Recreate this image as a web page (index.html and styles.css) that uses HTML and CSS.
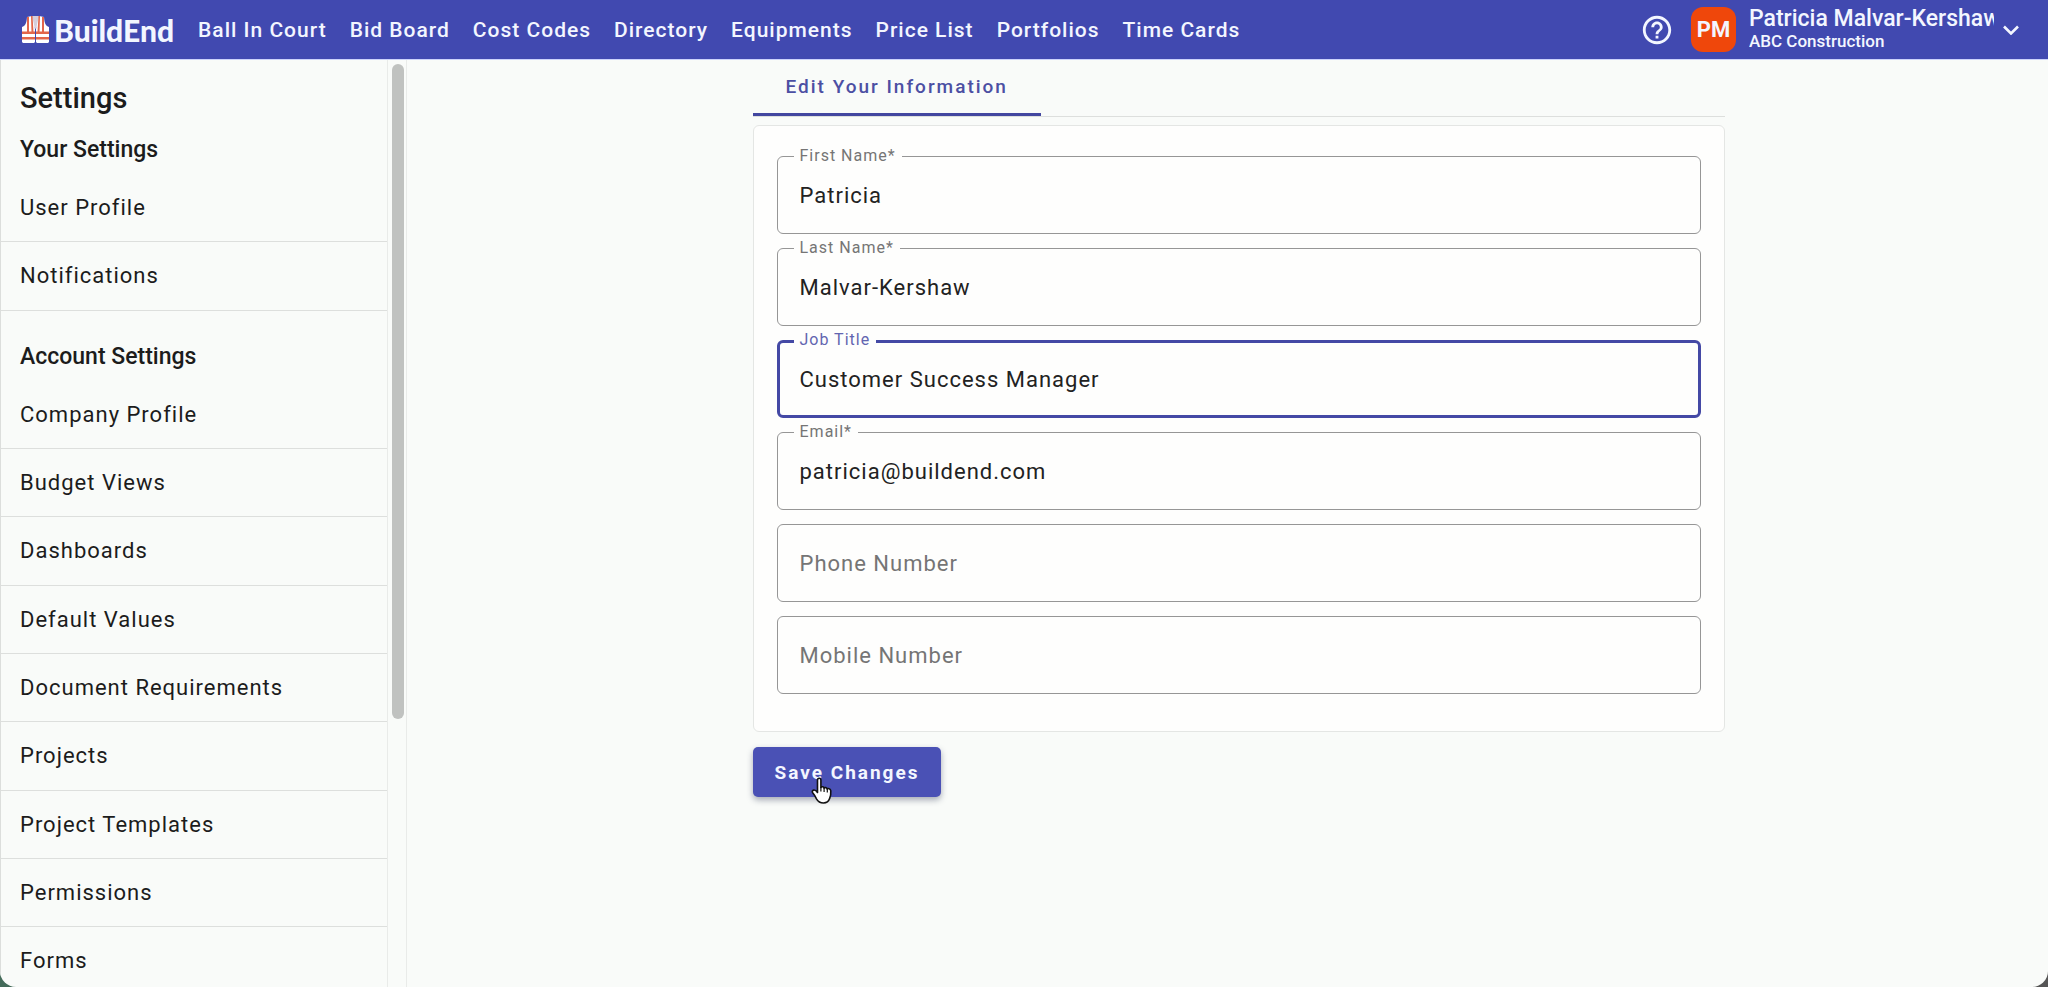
FILE: index.html
```html
<!DOCTYPE html>
<html lang="en">
<head>
<meta charset="utf-8">
<meta name="viewport" content="width=device-width, initial-scale=1">
<title>BuildEnd Settings</title>
<link rel="stylesheet" href="styles.css">
</head>
<body>
<div class="window">
  <header class="topbar">
    <a class="brand" href="#">
      <svg class="brand-icon" viewBox="0 0 27 28" aria-hidden="true">
        <path d="M10 0h7l-1 9-2.500 4L11 9z" fill="#d5cfdc"/>
        <path d="M5 1l5-1 3 13v13l-1 1H1l-1-1V11c3-1 4.500-3 5-10z" fill="#fff"/>
        <path d="M22 1l-5-1-3 13v13l1 1h11l1-1V11c-3-1-4.500-3-5-10z" fill="#fff"/>
        <path d="M5 1h2v15H5zM9 0h1.500l1 16H9.500zM16.500 0H18l-.5 16h-2zM20 1h2v15h-2z" fill="#e2664b"/>
        <path d="M0 15.500h13V18H0zM14 15.500h13V18H14zM0 21h13v2.500H0zM14 21h13v2.500H14z" fill="#e2664b"/>
      </svg>
      <span>BuildEnd</span>
    </a>
    <nav class="topnav" aria-label="Main">
      <a href="#">Ball In Court</a>
      <a href="#">Bid Board</a>
      <a href="#">Cost Codes</a>
      <a href="#">Directory</a>
      <a href="#">Equipments</a>
      <a href="#">Price List</a>
      <a href="#">Portfolios</a>
      <a href="#">Time Cards</a>
    </nav>
    <button class="help" type="button" aria-label="Help">
      <svg viewBox="0 0 24 24" aria-hidden="true"><path fill="currentColor" d="M11 18h2v-2h-2v2zm1-16C6.480 2 2 6.480 2 12s4.480 10 10 10 10-4.480 10-10S17.520 2 12 2zm0 18c-4.410 0-8-3.590-8-8s3.590-8 8-8 8 3.590 8 8-3.590 8-8 8zm0-14c-2.210 0-4 1.790-4 4h2c0-1.100.9-2 2-2s2 .9 2 2c0 2-3 1.750-3 5h2c0-2.250 3-2.500 3-5 0-2.210-1.790-4-4-4z"/></svg>
    </button>
    <button class="account" type="button">
      <span class="avatar">PM</span>
      <span class="account-text">
        <span class="account-name">Patricia Malvar-Kershaw</span>
        <span class="account-company">ABC Construction</span>
      </span>
      <svg class="chevron" viewBox="0 0 16 10" aria-hidden="true"><path d="M1 1.500l7 7 7-7" fill="none" stroke="currentColor" stroke-width="2.600"/></svg>
    </button>
  </header>

  <div class="body">
    <aside class="sidebar">
      <div class="menu">
        <h1>Settings</h1>
        <h2>Your Settings</h2>
        <ul>
          <li><a href="#">User Profile</a></li>
          <li><a href="#">Notifications</a></li>
        </ul>
        <h2 class="next">Account Settings</h2>
        <ul>
          <li><a href="#">Company Profile</a></li>
          <li><a href="#">Budget Views</a></li>
          <li><a href="#">Dashboards</a></li>
          <li><a href="#">Default Values</a></li>
          <li><a href="#">Document Requirements</a></li>
          <li><a href="#">Projects</a></li>
          <li><a href="#">Project Templates</a></li>
          <li><a href="#">Permissions</a></li>
          <li><a href="#">Forms</a></li>
        </ul>
      </div>
      <div class="scroll-track"><div class="scroll-thumb"></div></div>
    </aside>

    <main class="content">
      <form class="profile">
        <div class="tabs" role="tablist">
          <button class="tab" type="button" role="tab" aria-selected="true">Edit Your Information</button>
        </div>
        <div class="card">
          <div class="field">
            <input id="first" type="text" value="Patricia">
            <label for="first">First Name*</label>
          </div>
          <div class="field">
            <input id="last" type="text" value="Malvar-Kershaw">
            <label for="last">Last Name*</label>
          </div>
          <div class="field active">
            <input id="title" type="text" value="Customer Success Manager">
            <label for="title">Job Title</label>
          </div>
          <div class="field">
            <input id="email" type="email" value="patricia@buildend.com">
            <label for="email">Email*</label>
          </div>
          <div class="field">
            <input type="tel" placeholder="Phone Number" aria-label="Phone Number">
          </div>
          <div class="field">
            <input type="tel" placeholder="Mobile Number" aria-label="Mobile Number">
          </div>
        </div>
        <button class="save" type="button">Save Changes
          <svg class="pointer" viewBox="0 0 22 28" aria-hidden="true"><path d="M6.500 3.200C6.500 1.900 7.200 1.200 8.200 1.200s1.700.7 1.700 2v7.300c.3-1 2.900-1 3.200.6.500-.9 2.800-.7 3.100.9.600-.8 3.300-.5 3.600 1.800.2 2.700-.1 5.300-1.200 7.800-.9 2.700-2.900 4.400-6.100 4.400-3.700 0-5.500-1.500-7-4.200-1.100-2.200-2.300-4.200-3.800-6-.9-1.200-.3-2.500 1-2.700 1.400-.2 2.700.8 3.800 2.400z" fill="#fff" stroke="#111" stroke-width="1.600" stroke-linejoin="round"/><path d="M9.900 10v4.500M13.100 11v4M16.300 12v3.500" stroke="#111" stroke-width="1.200" fill="none"/></svg>
        </button>
      </form>
    </main>
  </div>
</div>
</body>
</html>
```
FILE: styles.css
```css
* { box-sizing: border-box; }

body {
  margin: 0;
  font-family: Roboto, "Liberation Sans", sans-serif;
  font-size: 22px;
  color: #1c1c1c;
  background: linear-gradient(90deg, #446b5a, #555);
}

button, input { font: inherit; }
button { border: 0; cursor: pointer; }
a { color: inherit; text-decoration: none; }

.window {
  display: flex;
  flex-direction: column;
  height: 100vh;
  overflow: hidden;
  background: #f9fbf9;
  border-radius: 0 0 16px 16px;
}

/* Top bar */
.topbar {
  display: flex;
  align-items: center;
  flex: none;
  height: 60px;
  padding: 0 29px 0 22px;
  color: #f3f6ff;
  background: #4149b0;
  border-bottom: 1px solid #ccd2fb;
}

.brand {
  display: flex;
  align-items: center;
  gap: 5px;
  margin-right: 24px;
  font: 900 30px/32px Lato, sans-serif;
}

.brand-icon { width: 27px; height: 28px; }

.topnav {
  display: flex;
  gap: 23px;
  font-size: 21px;
  font-weight: 500;
  letter-spacing: 1px;
  white-space: nowrap;
}

.help {
  width: 34px;
  height: 34px;
  margin-left: auto;
  padding: 0;
  color: inherit;
  background: none;
}

.help svg { display: block; width: 34px; height: 34px; }

.account {
  display: flex;
  align-items: center;
  margin-left: 17px;
  padding: 0;
  color: inherit;
  background: none;
  text-align: left;
}

.avatar {
  width: 45px;
  height: 45px;
  margin-right: 13px;
  border-radius: 12px;
  background: #ef470b;
  font-weight: 700;
  line-height: 45px;
  text-align: center;
}

.account-text {
  display: flex;
  flex-direction: column;
  width: 245px;
  overflow: hidden;
  font-weight: 500;
  white-space: nowrap;
}

.account-name { font-size: 23px; line-height: 24px; }
.account-company { padding-bottom: 2px; font-size: 17px; line-height: 20px; }
.chevron { width: 16px; height: 10px; margin-left: 9px; }

/* Sidebar */
.body { display: flex; flex: 1; min-height: 0; }

.sidebar {
  display: flex;
  flex: none;
  width: 407px;
  overflow: hidden;
  border-right: 1px solid #e9ebe9;
  border-left: 1px solid #dcdedc;
}

.menu { flex: 1; border-right: 1px solid #e9ebe9; }

.menu h1 {
  margin: 0;
  padding: 22px 19px 0;
  font-size: 29px;
  font-weight: 500;
  line-height: 32px;
}

.menu h2 {
  margin: 0;
  padding: 20px 19px 8px;
  font-size: 23px;
  font-weight: 500;
  line-height: 32px;
}

.menu h2.next { padding-top: 30px; }
.menu ul { margin: 0; padding: 0; list-style: none; }

.menu a {
  display: block;
  padding: 0 19px;
  border-bottom: 1px solid #dddfdd;
  letter-spacing: 1px;
  line-height: 3.06;
}

.scroll-track { width: 18px; padding: 4px 2px 0 4px; }

.scroll-thumb {
  width: 12px;
  height: 71%;
  border-radius: 6px;
  background: #c0c2c0;
}

/* Profile form */
.content { flex: 1; padding: 0 24px 0 46px; }
.profile { max-width: 972px; margin: 0 auto; }
.tabs { border-bottom: 1px solid #dddfdd; }

.tab {
  display: block;
  height: 56px;
  padding: 0 33px;
  border-bottom: 3px solid #4347a0;
  background: none;
  color: #4c4fa3;
  font-size: 19px;
  font-weight: 500;
  letter-spacing: 2px;
}

.card {
  display: grid;
  gap: 14px;
  margin-top: 8px;
  padding: 30px 23px 37px;
  border: 1px solid #e4e6e4;
  border-radius: 6px;
  background: #fefefd;
}

.field { position: relative; }

.field input {
  display: block;
  width: 100%;
  height: 78px;
  padding: 0 22px;
  border: 1px solid #969696;
  border-radius: 6px;
  outline: 0;
  background: transparent;
  color: #222;
  letter-spacing: 1px;
}

.field input::placeholder { color: #757575; opacity: 1; }

.field label {
  position: absolute;
  top: -10px;
  left: 17px;
  padding: 0 6px;
  background: #fefefd;
  color: #757575;
  font-size: 16px;
  letter-spacing: 1px;
  line-height: 20px;
}

.field.active input { padding: 0 20px; border: 3px solid #4449a5; }
.field.active label { color: #6265b0; }

.save {
  position: relative;
  height: 50px;
  margin-top: 15px;
  padding: 0 22px;
  border-radius: 5px;
  background: #4a51b5;
  box-shadow: 0 3px 6px rgba(40, 50, 80, 0.4);
  color: #f3f6ff;
  font-size: 19px;
  font-weight: 700;
  letter-spacing: 2px;
}

.pointer {
  position: absolute;
  top: 30px;
  left: 58px;
  width: 22px;
  height: 28px;
}
```
